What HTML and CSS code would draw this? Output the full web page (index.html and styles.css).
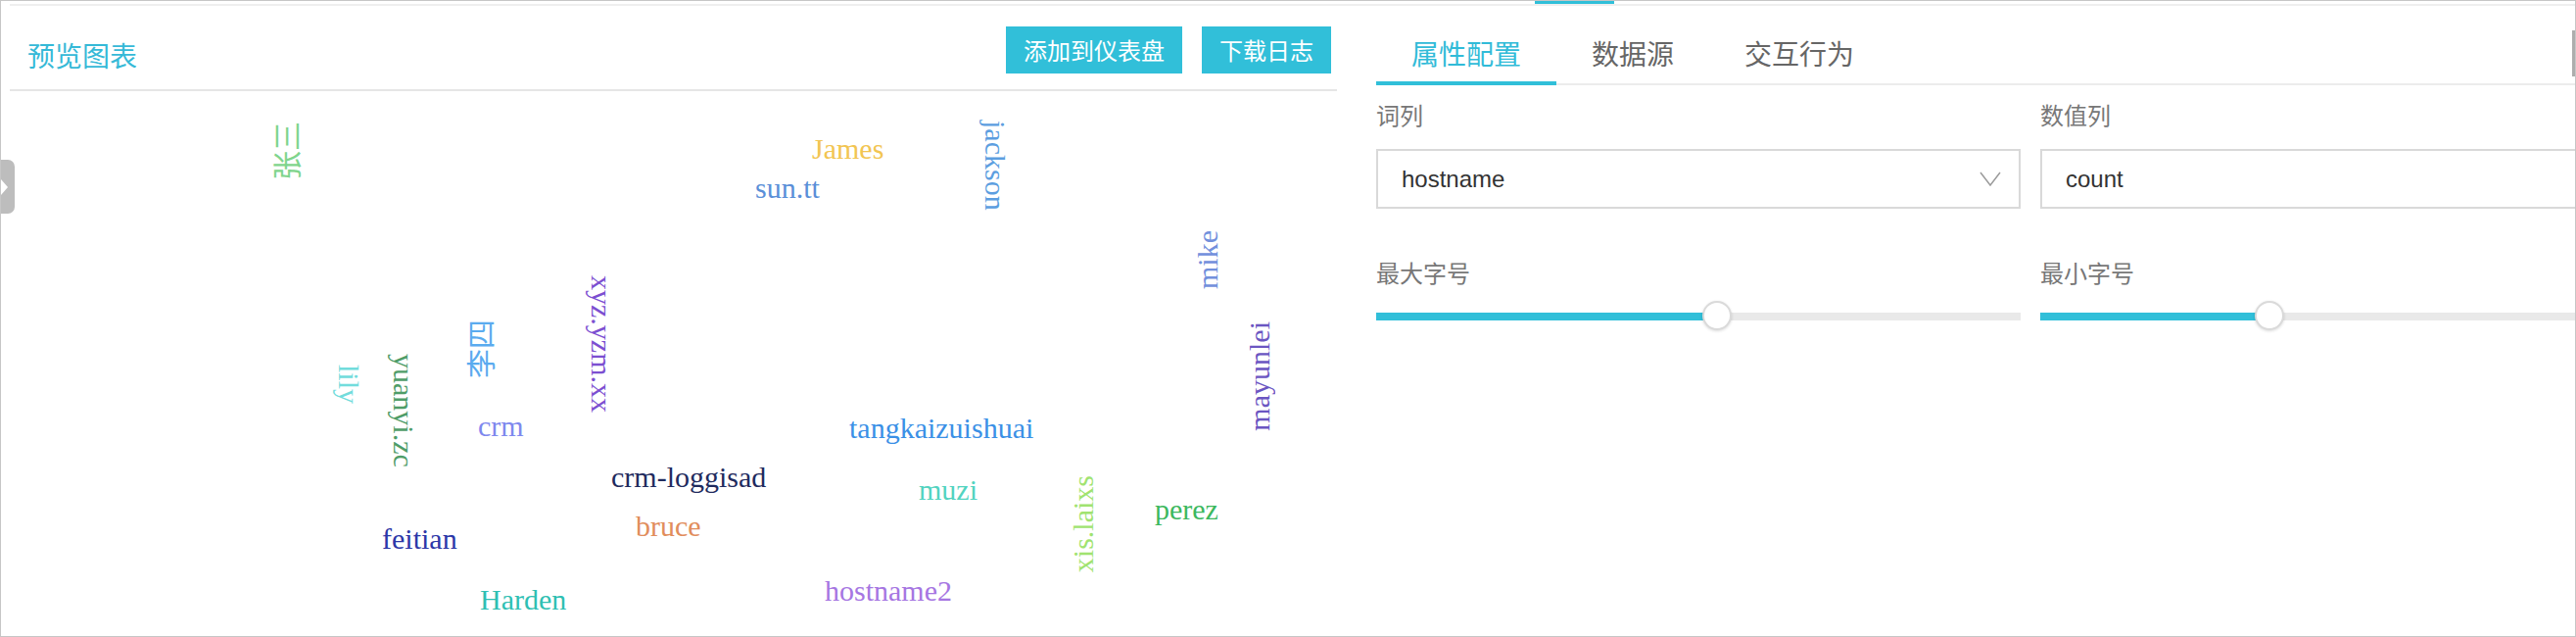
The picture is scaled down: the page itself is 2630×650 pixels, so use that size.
FILE: index.html
```html
<!DOCTYPE html>
<html lang="zh-CN">
<head>
<meta charset="utf-8">
<title>预览图表</title>
<link rel="stylesheet" href="styles.css">
</head>
<body>
<div class="frame">
  <div class="topstrip"><span class="top-active"></span></div>
  <div class="collapse-tab"><span class="collapse-arrow"></span></div>
  <div class="main">
    <section class="preview">
      <header class="preview-head">
        <h2 class="preview-title">预览图表</h2>
        <div class="actions">
          <button class="btn">添加到仪表盘</button>
          <button class="btn">下载日志</button>
        </div>
      </header>
      <div class="cloud">
        <span class="w v up" style="left:269px;top:31px;color:#7fd58d">张三</span>
        <span class="w" style="left:819px;top:44px;color:#f2c552">James</span>
        <span class="w" style="left:761px;top:84px;color:#5a8fd8">sun.tt</span>
        <span class="w v" style="left:991px;top:30px;color:#5c9ee0">jackson</span>
        <span class="w v up" style="left:1208px;top:142px;color:#7290dc">mike</span>
        <span class="w v up" style="left:467px;top:233px;color:#5aabef">李四</span>
        <span class="w v" style="left:589px;top:188px;color:#7c4fd1">xyz.yzm.xx</span>
        <span class="w v" style="left:331px;top:279px;color:#72dcdc">lily</span>
        <span class="w v" style="left:387px;top:268px;color:#4f9d68">yuanyi.zc</span>
        <span class="w v up" style="left:1261px;top:235px;color:#6b56c2">mayunlei</span>
        <span class="w" style="left:478px;top:327px;color:#7e88ee">crm</span>
        <span class="w" style="left:857px;top:329px;color:#3a90e6">tangkaizuishuai</span>
        <span class="w" style="left:614px;top:379px;color:#1f2b5e">crm-loggisad</span>
        <span class="w" style="left:928px;top:392px;color:#52d3c0">muzi</span>
        <span class="w v up" style="left:1081px;top:392px;color:#a0e370">xis.laixs</span>
        <span class="w" style="left:1169px;top:412px;color:#3cb85e">perez</span>
        <span class="w" style="left:380px;top:442px;color:#2c37a8">feitian</span>
        <span class="w" style="left:639px;top:429px;color:#e18d5c">bruce</span>
        <span class="w" style="left:480px;top:504px;color:#2fbfb3">Harden</span>
        <span class="w" style="left:832px;top:495px;color:#a676e2">hostname2</span>
      </div>
    </section>
    <section class="config">
      <nav class="tabs">
        <span class="tab active">属性配置</span>
        <span class="tab">数据源</span>
        <span class="tab">交互行为</span>
      </nav>
      <div class="form">
        <div class="field">
          <label class="label">词列</label>
          <div class="select">
            <span>hostname</span>
            <svg class="chev" width="22" height="15" viewBox="0 0 22 15"><polyline points="1,1 11,14 21,1" fill="none" stroke="#9b9b9b" stroke-width="1.5"/></svg>
          </div>
        </div>
        <div class="field">
          <label class="label">数值列</label>
          <div class="select">
            <span>count</span>
          </div>
        </div>
        <div class="field">
          <label class="label label-gap">最大字号</label>
          <div class="slider">
            <div class="track"><div class="fill" style="width:52.9%"></div></div>
            <span class="knob" style="left:calc(52.9% - 15px)"></span>
          </div>
        </div>
        <div class="field">
          <label class="label label-gap">最小字号</label>
          <div class="slider">
            <div class="track"><div class="fill" style="width:35.6%"></div></div>
            <span class="knob" style="left:calc(35.6% - 15px)"></span>
          </div>
        </div>
      </div>
      <span class="scroll-thumb"></span>
    </section>
  </div>
</div>
</body>
</html>
```

FILE: styles.css
```css
* {
  box-sizing: border-box;
  margin: 0;
  padding: 0;
}

html, body {
  width: 2630px;
  height: 650px;
  overflow: hidden;
  background: #fff;
}

body {
  font-family: "Noto Sans CJK SC", "Liberation Sans", sans-serif;
}

.frame {
  position: relative;
  width: 2630px;
  height: 650px;
  border: 1px solid #c6c6c6;
  overflow: hidden;
  display: flex;
  flex-direction: column;
}

.topstrip {
  height: 5px;
  margin-left: 9px;
  border-bottom: 2px solid #efefef;
  flex: none;
}

.top-active {
  position: absolute;
  left: 1566px;
  top: -1px;
  width: 81px;
  height: 4px;
  background: #31bfd9;
}

.collapse-tab {
  position: absolute;
  left: -1px;
  top: 162px;
  width: 15px;
  height: 55px;
  background: #bdbdbd;
  border-radius: 0 7px 7px 0;
  z-index: 2;
}

.collapse-arrow {
  position: absolute;
  left: 1px;
  top: 20px;
  width: 0;
  height: 0;
  border-left: 7px solid #fff;
  border-top: 8px solid transparent;
  border-bottom: 8px solid transparent;
}

.main {
  flex: 1;
  display: flex;
  min-height: 0;
}

/* ---------- preview ---------- */
.preview {
  width: 1355px;
  margin-left: 9px;
  flex: none;
  display: flex;
  flex-direction: column;
}

.preview-head {
  height: 87px;
  display: flex;
  justify-content: space-between;
  align-items: flex-start;
  padding: 0 6px 0 18px;
  border-bottom: 2px solid #e6e6e6;
}

.preview-title {
  margin-top: 36px;
  font-size: 28px;
  line-height: 28px;
  font-weight: 400;
  color: #35b9d7;
}

.actions {
  display: flex;
  gap: 20px;
  margin-top: 21px;
}

.btn {
  height: 48px;
  padding: 0 18px;
  border: 0;
  background: #31bfd9;
  color: #fff;
  font-family: "Noto Sans CJK SC", sans-serif;
  font-size: 24px;
  line-height: 48px;
}

.cloud {
  position: relative;
  flex: 1;
}

.w {
  position: absolute;
  font-family: "Liberation Serif", "Noto Sans CJK SC", serif;
  font-size: 30px;
  line-height: 30px;
  white-space: nowrap;
}

.v {
  writing-mode: vertical-rl;
  text-orientation: sideways;
}

.v.up {
  transform: rotate(180deg);
}

/* ---------- config ---------- */
.config {
  position: relative;
  flex: 1;
  min-width: 0;
  margin-left: 40px;
  overflow: hidden;
}

.tabs {
  display: flex;
  border-bottom: 2px solid #ececec;
  width: 1400px;
}

.tab {
  padding: 28px 36px 9px;
  font-size: 28px;
  line-height: 40px;
  color: #666;
  border-bottom: 4px solid transparent;
  margin-bottom: -2px;
}

.tab.active {
  color: #31bbd8;
  border-bottom-color: #31bfd9;
}

.form {
  display: grid;
  grid-template-columns: 658px 658px;
  column-gap: 20px;
  width: 1336px;
}

.field {
  display: flex;
  flex-direction: column;
}

.label {
  margin-top: 13px;
  font-size: 24px;
  line-height: 34px;
  color: #777;
}

.label-gap {
  margin-top: 48px;
}

.select {
  margin-top: 18px;
  height: 61px;
  border: 2px solid #d9d9d9;
  display: flex;
  align-items: center;
  justify-content: space-between;
  padding: 0 18px 0 24px;
  font-family: "Liberation Sans", sans-serif;
  font-size: 24px;
  color: #333;
}

.chev {
  display: block;
}

.slider {
  position: relative;
  height: 56px;
}

.track {
  margin-top: 24px;
  height: 8px;
  background: #e9e9e9;
}

.fill {
  height: 100%;
  background: #31bfd9;
}

.knob {
  position: absolute;
  top: 12px;
  width: 30px;
  height: 30px;
  border-radius: 50%;
  background: #fff;
  border: 2px solid #dadada;
  box-shadow: 0 1px 3px rgba(0, 0, 0, 0.15);
}

.scroll-thumb {
  position: absolute;
  right: 0;
  top: 25px;
  width: 3px;
  height: 47px;
  background: #adadad;
}
```
